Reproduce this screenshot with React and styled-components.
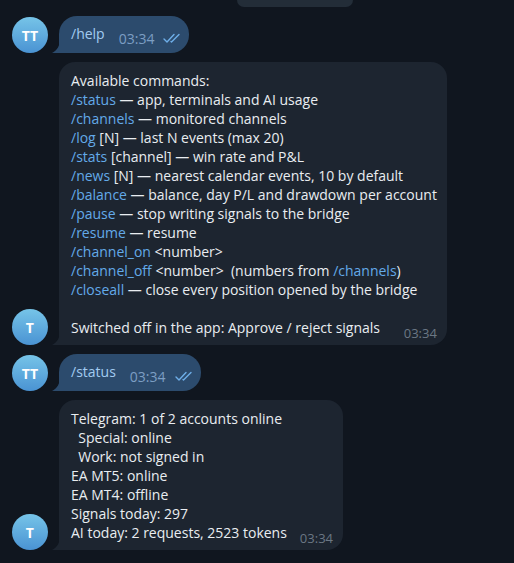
import React from "react";
import styled, { createGlobalStyle } from "styled-components";

const Global = createGlobalStyle`
  html, body { margin: 0; padding: 0; background: #10161f; }
  body { font-family: "Open Sans", "Noto Sans", sans-serif; -webkit-font-smoothing: antialiased; }
`;

const Chat = styled.div`
  width: 514px;
  height: 563px;
  overflow: hidden;
  background: #10161f;
  display: flex;
  flex-direction: column;
  gap: 9px;
`;

const TopRow = styled.div`
  height: 7px;
  padding-left: 237px;
  display: flex;
`;

const Fragment = styled.div`
  width: 116px;
  height: 7px;
  background: #232d38;
  border-radius: 0 0 9px 9px;
`;

const Row = styled.div`
  display: flex;
  align-items: flex-end;
  padding-left: 12px;
  gap: 11px;
`;

const Avatar = styled.div`
  width: 36px;
  height: 36px;
  border-radius: 50%;
  flex: none;
  background: linear-gradient(180deg, #76c4e8 0%, #4a93d3 100%);
  color: #fff;
  font-size: 14px;
  font-weight: 700;
  display: flex;
  align-items: center;
  justify-content: center;
  letter-spacing: 0.2px;
`;

const Bubble = styled.div`
  position: relative;
  background: ${(p) => (p.$out ? "#2c4b6d" : "#1d2530")};
  border-radius: ${(p) => (p.$out ? "18px 18px 18px 0" : "16px 16px 16px 0")};
  padding: ${(p) => (p.$out ? "0 7px 0 12px" : "9px 10px 8px 12px")};
  height: ${(p) => (p.$out ? "37px" : "auto")};
  box-sizing: border-box;
  color: #e9edf1;
  font-size: 14px;
  line-height: 19px;
  white-space: pre;
`;

const Tail = styled.svg`
  position: absolute;
  left: -7px;
  bottom: 0;
  width: 8px;
  height: 14px;
`;

const OutRow = styled.div`
  display: flex;
  align-items: center;
  height: 100%;
`;

const OutText = styled.span`
  color: #a2cbf1;
  font-size: 14px;
  margin-top: -2px;
`;

const OutTime = styled.span`
  color: #7c9ec3;
  font-size: 14px;
  margin-left: 14px;
  margin-top: 8px;
`;

const Checks = styled.svg`
  width: 19px;
  height: 10px;
  margin-left: 9px;
  margin-top: 6px;
`;

const Line = styled.div`
  display: flex;
  min-height: 19px;
`;

const LastLine = styled.div`
  display: flex;
  align-items: flex-end;
`;

const Link = styled.span`
  color: #63aae9;
`;

const Time = styled.span`
  color: #6b7784;
  font-size: 13px;
  margin-left: auto;
  padding-left: 13px;
  margin-bottom: -6px;
`;

const TailSvg = ({ color }) => (
  <Tail viewBox="0 0 8 14">
    <path d="M8 0 C8 7 5 11.5 0 14 L8 14 Z" fill={color} />
  </Tail>
);

const CheckSvg = () => (
  <Checks viewBox="0 0 19 10">
    <path d="M1 6 L4 9 L11 1.5" fill="none" stroke="#6eaee8" strokeWidth="1.4" strokeLinecap="round" strokeLinejoin="round" />
    <path d="M8 8.5 L8.5 9 L16 1.5" fill="none" stroke="#6eaee8" strokeWidth="1.4" strokeLinecap="round" strokeLinejoin="round" />
  </Checks>
);

const Outgoing = ({ text }) => (
  <Row>
    <Avatar>TT</Avatar>
    <Bubble $out>
      <TailSvg color="#2c4b6d" />
      <OutRow>
        <OutText>{text}</OutText>
        <OutTime>03:34</OutTime>
        <CheckSvg />
      </OutRow>
    </Bubble>
  </Row>
);

const helpLines = [
  [null, "Available commands:"],
  ["/status", " — app, terminals and AI usage"],
  ["/channels", " — monitored channels"],
  ["/log", " [N] — last N events (max 20)"],
  ["/stats", " [channel] — win rate and P&L"],
  ["/news", " [N] — nearest calendar events, 10 by default"],
  ["/balance", " — balance, day P/L and drawdown per account"],
  ["/pause", " — stop writing signals to the bridge"],
  ["/resume", " — resume"],
  ["/channel_on", " <number>"],
];

const statusLines = [
  "Telegram: 1 of 2 accounts online",
  "  Special: online",
  "  Work: not signed in",
  "EA MT5: online",
  "EA MT4: offline",
  "Signals today: 297",
];

export default function App() {
  return (
    <>
      <Global />
      <Chat>
        <TopRow>
          <Fragment />
        </TopRow>
        <Outgoing text="/help" />
        <Row>
          <Avatar>T</Avatar>
          <Bubble>
            <TailSvg color="#1d2530" />
            {helpLines.map(([cmd, rest], i) => (
              <Line key={i}>
                {cmd && <Link>{cmd}</Link>}
                <span>{rest}</span>
              </Line>
            ))}
            <Line>
              <Link>/channel_off</Link>
              <span>{" <number>  (numbers from "}</span>
              <Link>/channels</Link>
              <span>)</span>
            </Line>
            <Line>
              <Link>/closeall</Link>
              <span> — close every position opened by the bridge</span>
            </Line>
            <Line />
            <LastLine>
              <span>Switched off in the app: Approve / reject signals</span>
              <Time>03:34</Time>
            </LastLine>
          </Bubble>
        </Row>
        <Outgoing text="/status" />
        <Row>
          <Avatar>T</Avatar>
          <Bubble>
            <TailSvg color="#1d2530" />
            {statusLines.map((l, i) => (
              <Line key={i}>{l}</Line>
            ))}
            <LastLine>
              <span>AI today: 2 requests, 2523 tokens</span>
              <Time>03:34</Time>
            </LastLine>
          </Bubble>
        </Row>
      </Chat>
    </>
  );
}
